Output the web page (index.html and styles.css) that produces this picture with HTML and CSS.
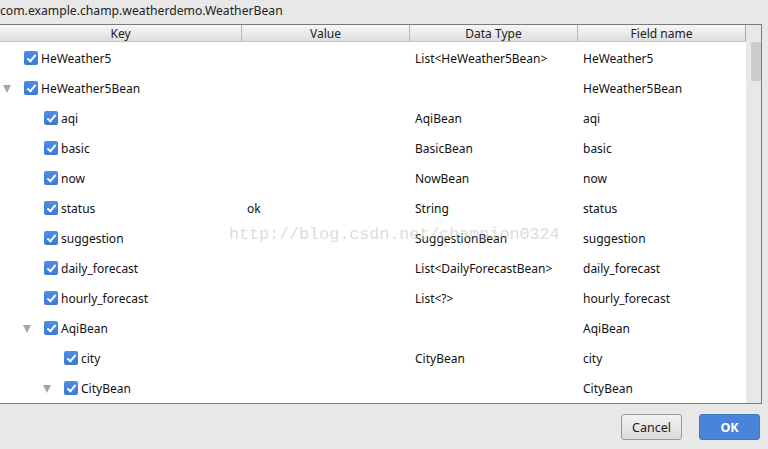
FILE: index.html
```html
<!DOCTYPE html>
<html>
<head>
<meta charset="utf-8">
<link rel="stylesheet" href="styles.css">
</head>
<body>
<div class="dialog">
  <div class="title">com.example.champ.weatherdemo.WeatherBean</div>
  <div class="frame">
    <div class="main">
      <div class="head">
        <div class="hc c-key">Key</div>
        <div class="hc c-val">Value</div>
        <div class="hc c-type">Data Type</div>
        <div class="hc c-field">Field name</div>
      </div>
      <div class="rows">
        <div class="row"><div class="c-key l0"><span class="tw"></span><span class="cb"></span>HeWeather5</div><div class="c-val"></div><div class="c-type">List&lt;HeWeather5Bean&gt;</div><div class="c-field">HeWeather5</div></div>
        <div class="row"><div class="c-key l0"><span class="tw open"></span><span class="cb"></span>HeWeather5Bean</div><div class="c-val"></div><div class="c-type"></div><div class="c-field">HeWeather5Bean</div></div>
        <div class="row"><div class="c-key l1"><span class="tw"></span><span class="cb"></span>aqi</div><div class="c-val"></div><div class="c-type">AqiBean</div><div class="c-field">aqi</div></div>
        <div class="row"><div class="c-key l1"><span class="tw"></span><span class="cb"></span>basic</div><div class="c-val"></div><div class="c-type">BasicBean</div><div class="c-field">basic</div></div>
        <div class="row"><div class="c-key l1"><span class="tw"></span><span class="cb"></span>now</div><div class="c-val"></div><div class="c-type">NowBean</div><div class="c-field">now</div></div>
        <div class="row"><div class="c-key l1"><span class="tw"></span><span class="cb"></span>status</div><div class="c-val">ok</div><div class="c-type">String</div><div class="c-field">status</div></div>
        <div class="row"><div class="c-key l1"><span class="tw"></span><span class="cb"></span>suggestion</div><div class="c-val"></div><div class="c-type">SuggestionBean</div><div class="c-field">suggestion</div></div>
        <div class="row"><div class="c-key l1"><span class="tw"></span><span class="cb"></span>daily_forecast</div><div class="c-val"></div><div class="c-type">List&lt;DailyForecastBean&gt;</div><div class="c-field">daily_forecast</div></div>
        <div class="row"><div class="c-key l1"><span class="tw"></span><span class="cb"></span>hourly_forecast</div><div class="c-val"></div><div class="c-type">List&lt;?&gt;</div><div class="c-field">hourly_forecast</div></div>
        <div class="row"><div class="c-key l1"><span class="tw open"></span><span class="cb"></span>AqiBean</div><div class="c-val"></div><div class="c-type"></div><div class="c-field">AqiBean</div></div>
        <div class="row"><div class="c-key l2"><span class="tw"></span><span class="cb"></span>city</div><div class="c-val"></div><div class="c-type">CityBean</div><div class="c-field">city</div></div>
        <div class="row"><div class="c-key l2"><span class="tw open"></span><span class="cb"></span>CityBean</div><div class="c-val"></div><div class="c-type"></div><div class="c-field">CityBean</div></div>
      </div>
      <div class="watermark">http://blog.csdn.net/champion0324</div>
    </div>
    <div class="scroll"><div class="thumb"></div></div>
  </div>
  <div class="buttons">
    <button class="btn cancel">Cancel</button>
    <button class="btn ok">OK</button>
  </div>
</div>
</body>
</html>
```
FILE: styles.css
```css
* { box-sizing: border-box; }
html, body { margin: 0; padding: 0; }
body {
  background: #e8e8e8;
  font-family: "Noto Sans", "Open Sans", sans-serif;
  font-size: 12px;
  color: #111;
  width: 768px;
  height: 449px;
  overflow: hidden;
}
.dialog { display: flex; flex-direction: column; height: 449px; }
.title {
  height: 24px;
  line-height: 22px;
  font-size: 12.2px;
  color: #222;
  white-space: nowrap;
}
.frame {
  display: flex;
  width: 762px;
  height: 380px;
  border-top: 1px solid #7a7a7a;
  border-right: 1px solid #7a7a7a;
  border-bottom: 1px solid #7a7a7a;
  background: #fff;
}
.main {
  position: relative;
  width: 746px;
  overflow: hidden;
  background: #fff;
}
.head {
  display: flex;
  height: 17px;
  background: linear-gradient(#f7f7f7, #dedede);
  border-bottom: 1px solid #c4c4c4;
  border-right: 1px solid #a8a8a8;
}
.hc {
  text-align: center;
  line-height: 17px;
  color: #222;
  border-right: 1px solid #b8b8b8;
}
.hc.c-field { border-right: none; }
.c-key { width: 242px; }
.c-val { width: 168px; }
.c-type { width: 168px; }
.c-field { width: 167px; }
.rows { padding-top: 1px; }
.row {
  display: flex;
  height: 30px;
  align-items: center;
  white-space: nowrap;
}
.row .c-val, .row .c-type, .row .c-field { padding-left: 5px; }
.row .c-key { display: flex; align-items: center; }
.l0 { padding-left: 3px; }
.l1 { padding-left: 23px; }
.l2 { padding-left: 43px; }
.tw {
  width: 21px;
  height: 10px;
  flex: none;
  position: relative;
}
.tw.open::before {
  content: "";
  position: absolute;
  left: 0;
  top: 2px;
  border-left: 4.5px solid transparent;
  border-right: 4.5px solid transparent;
  border-top: 8px solid #a6a6a6;
}
.cb {
  width: 14px;
  height: 14px;
  flex: none;
  border-radius: 2px;
  background: linear-gradient(#4d8ee6, #3a79d6);
  margin-right: 3px;
  position: relative;
}
.cb::after {
  content: "";
  position: absolute;
  left: 5px;
  top: 2px;
  width: 3px;
  height: 7px;
  border-right: 2px solid #fff;
  border-bottom: 2px solid #fff;
  transform: rotate(40deg);
}
.watermark {
  position: absolute;
  left: 229px;
  top: 200px;
  font-family: "Liberation Mono", "DejaVu Sans Mono", monospace;
  font-size: 16.7px;
  color: rgba(190, 190, 185, 0.55);
  pointer-events: none;
  white-space: nowrap;
}
.scroll {
  width: 15px;
  background: #e8e8e8;
  padding-top: 17px;
  padding-left: 5px;
}
.thumb {
  width: 10px;
  height: 39px;
  background: #cdcdcd;
}
.buttons {
  display: flex;
  justify-content: flex-end;
  gap: 17px;
  padding-top: 10px;
  padding-right: 8px;
}
.btn {
  width: 61px;
  height: 26px;
  font-family: "Noto Sans", "Open Sans", sans-serif;
  font-size: 12.5px;
  border-radius: 3px;
  padding: 0;
}
.cancel {
  background: linear-gradient(#f2f2f2, #dadada);
  border: 1px solid #9a9a9a;
  color: #222;
}
.ok {
  background: #4a84d8;
  border: 1px solid #3e78cc;
  color: #fff;
  font-weight: bold;
}
```
